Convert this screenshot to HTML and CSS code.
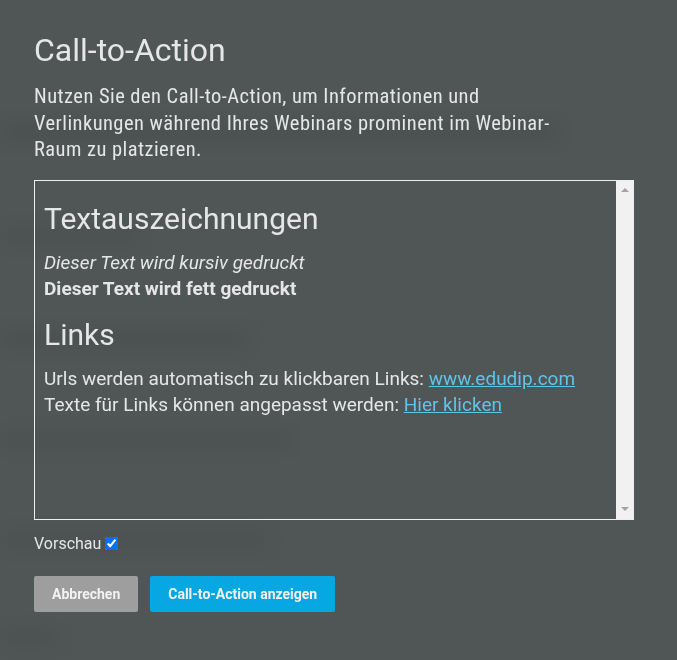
FILE: index.html
```html
<!DOCTYPE html>
<html lang="de">

<head>
    <meta charset="UTF-8">
    <meta name="viewport" content="width=device-width, initial-scale=1.0">
    <title>Call-to-Action</title>
    <link rel="stylesheet" href="styles.css">
</head>

<body>

    <!-- blurred page behind the dialog -->
    <div class="backdrop">
        <span class="blur b1"></span>
        <span class="blur b2"></span>
        <span class="blur b3"></span>
        <span class="blur b4"></span>
        <span class="blur b5"></span>
        <span class="blur b6"></span>
    </div>

    <div class="modal">
        <h2 class="title">Call-to-Action</h2>
        <p class="intro">Nutzen Sie den Call-to-Action, um Informationen und<br>
            Verlinkungen während Ihres Webinars prominent im Webinar-Raum zu platzieren.</p>

        <div class="editor">
            <div class="editor-content" contenteditable="true">
                <h3>Textauszeichnungen</h3>
                <p><em>Dieser Text wird kursiv gedruckt</em><br>
                    <strong>Dieser Text wird fett gedruckt</strong></p>
                <h3>Links</h3>
                <p>Urls werden automatisch zu klickbaren Links: <a href="#">www.edudip.com</a><br>
                    Texte für Links können angepasst werden: <a href="#">Hier klicken</a></p>
            </div>
            <div class="scrollbar">
                <span class="arrow arrow-up"></span>
                <span class="arrow arrow-down"></span>
            </div>
        </div>

        <div class="preview">
            <label for="preview">Vorschau</label>
            <input type="checkbox" id="preview" checked>
        </div>

        <div class="actions">
            <button class="btn btn-cancel">Abbrechen</button>
            <button class="btn btn-primary">Call-to-Action anzeigen</button>
        </div>
    </div>

</body>

</html>
```

FILE: styles.css
```css
body {
    margin: 0;
    padding: 0;
    background-color: #505556;
    color: #e6e6e6;
    font-family: Roboto, "Noto Sans", sans-serif;
    height: 660px;
    overflow: hidden;
}

.backdrop {
    position: fixed;
    inset: 0;
    z-index: 0;
    pointer-events: none;
}

.blur {
    position: absolute;
    display: block;
    background-color: rgba(0, 0, 0, 0.06);
    filter: blur(9px);
    border-radius: 10px;
}

.b1 { left: 0; top: 122px; width: 560px; height: 20px; }
.b2 { left: 0; top: 228px; width: 140px; height: 16px; }
.b3 { left: 0; top: 330px; width: 250px; height: 18px; }
.b4 { left: 0; top: 432px; width: 290px; height: 16px; }
.b5 { left: 0; top: 532px; width: 270px; height: 16px; }
.b6 { left: 0; top: 630px; width: 60px; height: 14px; }

.modal {
    position: relative;
    z-index: 1;
    padding: 30px 43px 0 34px;
}

.title {
    font-size: 32px;
    font-weight: 400;
    margin: 0 0 13px;
    line-height: 40px;
}

.intro {
    font-family: "Roboto Condensed", Roboto, sans-serif;
    font-size: 20.5px;
    letter-spacing: 0.45px;
    line-height: 26.5px;
    margin: 0 0 17px;
    width: 545px;
}

.editor {
    box-sizing: border-box;
    display: flex;
    width: 600px;
    height: 340px;
    border: 1px solid #eeeeee;
}

.editor-content {
    flex: 1;
    padding: 20px 9px 0;
    outline: none;
    font-size: 19px;
    line-height: 26.5px;
}

.editor-content h3 {
    font-size: 30px;
    font-weight: 400;
    margin: 14px 0 13px;
    line-height: 36px;
}

.editor-content h3:first-child {
    margin-top: 0;
}

.editor-content p {
    margin: 0;
}

.editor-content strong {
    font-weight: 700;
}

.editor-content a {
    color: #5ec4ea;
}

.scrollbar {
    width: 17px;
    background-color: #f1f1f1;
    display: flex;
    flex-direction: column;
    justify-content: space-between;
    align-items: center;
    padding: 7px 0 8px;
}

.arrow {
    width: 0;
    height: 0;
    border-left: 4px solid transparent;
    border-right: 4px solid transparent;
}

.arrow-up {
    border-bottom: 4px solid #a3a3a3;
}

.arrow-down {
    border-top: 4px solid #a3a3a3;
}

.preview {
    display: flex;
    align-items: center;
    margin-top: 14px;
    font-size: 16px;
    line-height: 20px;
}

.preview label {
    margin-right: 4px;
}

.preview input {
    width: 13px;
    height: 13px;
    margin: 0;
    accent-color: #0b6cf5;
}

.actions {
    display: flex;
    gap: 12px;
    margin-top: 22px;
}

.btn {
    border: none;
    border-radius: 2px;
    height: 36px;
    padding: 0 18px;
    color: #f2f2f2;
    font-family: Roboto, sans-serif;
    font-size: 14px;
    font-weight: 700;
    cursor: pointer;
}

.btn-cancel {
    background-color: #9e9e9e;
}

.btn-primary {
    background-color: #06a7e2;
}
```
